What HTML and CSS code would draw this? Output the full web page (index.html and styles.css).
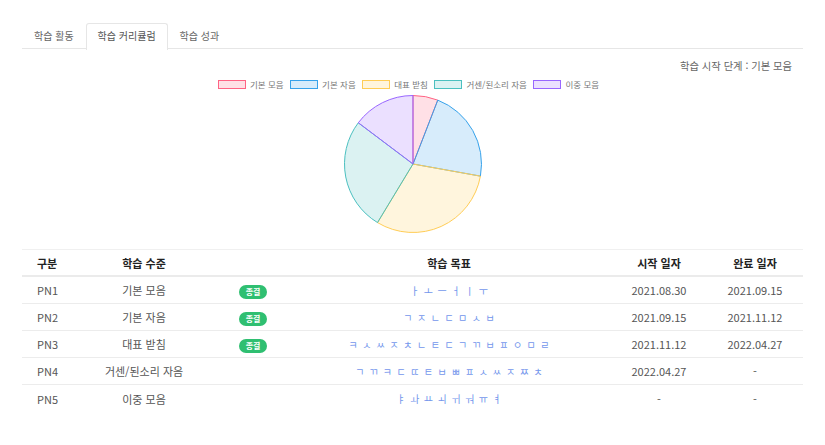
FILE: index.html
```html
<!DOCTYPE html>
<html lang="ko">
<head>
<meta charset="utf-8">
<link rel="stylesheet" href="styles.css">
</head>
<body>
<div class="page">
  <div class="tabs">
    <div class="tab">학습 활동</div>
    <div class="tab active">학습 커리큘럼</div>
    <div class="tab">학습 성과</div>
  </div>
  <div class="stage">학습 시작 단계 : 기본 모음</div>
  <div class="legend">
    <div class="lg"><span class="box pink"></span>기본 모음</div>
    <div class="lg"><span class="box blue"></span>기본 자음</div>
    <div class="lg"><span class="box yellow"></span>대표 받침</div>
    <div class="lg"><span class="box teal"></span>거센/된소리 자음</div>
    <div class="lg"><span class="box purple"></span>이중 모음</div>
  </div>
  <div class="chart">
    <svg class="pie" width="140" height="140" viewBox="0 0 140 140">
      <path d="M70 70 L70 1.5 A68.5 68.5 0 0 1 94.77 6.14 Z" fill="rgba(255,99,132,0.2)" stroke="rgb(255,99,132)" stroke-width="1"/>
      <path d="M70 70 L94.77 6.14 A68.5 68.5 0 0 1 137.42 82.13 Z" fill="rgba(54,162,235,0.2)" stroke="rgb(54,162,235)" stroke-width="1"/>
      <path d="M70 70 L137.42 82.13 A68.5 68.5 0 0 1 34.52 128.59 Z" fill="rgba(255,205,86,0.2)" stroke="rgb(255,205,86)" stroke-width="1"/>
      <path d="M70 70 L34.52 128.59 A68.5 68.5 0 0 1 15.29 28.78 Z" fill="rgba(75,192,192,0.2)" stroke="rgb(75,192,192)" stroke-width="1"/>
      <path d="M70 70 L15.29 28.78 A68.5 68.5 0 0 1 70 1.5 Z" fill="rgba(153,102,255,0.2)" stroke="rgb(153,102,255)" stroke-width="1"/>
    </svg>
  </div>
  <div class="table">
    <div class="row head">
      <div class="c1">구분</div>
      <div class="c2">학습 수준</div>
      <div class="c3"></div>
      <div class="c4">학습 목표</div>
      <div class="c5">시작 일자</div>
      <div class="c6">완료 일자</div>
    </div>
    <div class="row">
      <div class="c1">PN1</div>
      <div class="c2">기본 모음</div>
      <div class="c3"><span class="badge">종결</span></div>
      <div class="c4 jamo"><span>ㅏ</span><span>ㅗ</span><span>ㅡ</span><span>ㅓ</span><span>ㅣ</span><span>ㅜ</span></div>
      <div class="c5">2021.08.30</div>
      <div class="c6">2021.09.15</div>
    </div>
    <div class="row">
      <div class="c1">PN2</div>
      <div class="c2">기본 자음</div>
      <div class="c3"><span class="badge">종결</span></div>
      <div class="c4 jamo"><span>ㄱ</span><span>ㅈ</span><span>ㄴ</span><span>ㄷ</span><span>ㅁ</span><span>ㅅ</span><span>ㅂ</span></div>
      <div class="c5">2021.09.15</div>
      <div class="c6">2021.11.12</div>
    </div>
    <div class="row">
      <div class="c1">PN3</div>
      <div class="c2">대표 받침</div>
      <div class="c3"><span class="badge">종결</span></div>
      <div class="c4 jamo"><span>ㅋ</span><span>ㅅ</span><span>ㅆ</span><span>ㅈ</span><span>ㅊ</span><span>ㄴ</span><span>ㅌ</span><span>ㄷ</span><span>ㄱ</span><span>ㄲ</span><span>ㅂ</span><span>ㅍ</span><span>ㅇ</span><span>ㅁ</span><span>ㄹ</span></div>
      <div class="c5">2021.11.12</div>
      <div class="c6">2022.04.27</div>
    </div>
    <div class="row">
      <div class="c1">PN4</div>
      <div class="c2">거센/된소리 자음</div>
      <div class="c3"></div>
      <div class="c4 jamo"><span>ㄱ</span><span>ㄲ</span><span>ㅋ</span><span>ㄷ</span><span>ㄸ</span><span>ㅌ</span><span>ㅂ</span><span>ㅃ</span><span>ㅍ</span><span>ㅅ</span><span>ㅆ</span><span>ㅈ</span><span>ㅉ</span><span>ㅊ</span></div>
      <div class="c5">2022.04.27</div>
      <div class="c6">-</div>
    </div>
    <div class="row last">
      <div class="c1">PN5</div>
      <div class="c2">이중 모음</div>
      <div class="c3"></div>
      <div class="c4 jamo"><span>ㅑ</span><span>ㅘ</span><span>ㅛ</span><span>ㅚ</span><span>ㅟ</span><span>ㅝ</span><span>ㅠ</span><span>ㅕ</span></div>
      <div class="c5">-</div>
      <div class="c6">-</div>
    </div>
  </div>
</div>
</body>
</html>
```
FILE: styles.css
```css
* { box-sizing: border-box; }
html, body { margin: 0; padding: 0; background: #fff; }
body {
  font-family: "Noto Sans CJK KR", "Noto Sans", sans-serif;
  font-size: 11px;
  color: #555;
}
.page { padding: 23px 22px 0 22px; width: 825px; }
.tabs {
  display: flex;
  border-bottom: 1px solid #e6e6e6;
  height: 26px;
}
.tab {
  height: 26px;
  line-height: 24px;
  padding: 0 11px 0 11px;
  font-size: 10px;
  color: #666;
  border: 1px solid transparent;
  border-bottom: none;
  border-radius: 3px 3px 0 0;
  margin-bottom: -1px;
}
.tab.active {
  background: #fff;
  border-color: #e6e6e6;
  height: 27px;
  color: #555;
}
.stage {
  margin-top: 9px;
  text-align: right;
  padding-right: 11px;
  line-height: 16px;
  font-size: 10.3px;
  color: #666;
}
.legend {
  margin-top: 2px;
  display: flex;
  justify-content: center;
  gap: 6.5px;
  height: 16px;
  align-items: center;
  font-size: 8.5px;
  color: #777;
  padding-right: 8px;
}
.lg { display: flex; align-items: center; }
.box {
  display: inline-block;
  width: 28px;
  height: 9px;
  border: 1px solid;
  margin-right: 4px;
}
.pink { background: rgba(255,99,132,0.2); border-color: rgb(255,99,132); }
.blue { background: rgba(54,162,235,0.2); border-color: rgb(54,162,235); }
.yellow { background: rgba(255,205,86,0.2); border-color: rgb(255,205,86); }
.teal { background: rgba(75,192,192,0.2); border-color: rgb(75,192,192); }
.purple { background: rgba(153,102,255,0.2); border-color: rgb(153,102,255); }
.chart {
  display: flex;
  justify-content: center;
  margin-top: 2px;
  height: 140px;
}
.pie { display: block; }
.table {
  margin-top: 15px;
  border-top: 1px solid #f0f0f0;
}
.row {
  display: grid;
  grid-template-columns: 60px 124px 94px 298px 122px 70px;
  padding-right: 13px;
  height: 27px;
  align-items: center;
  border-bottom: 1px solid #ececec;
}
.row.last { border-bottom: none; }
.row.head {
  height: 27px;
  border-bottom: 2px solid #ebebeb;
  font-weight: bold;
  color: #222;
}
.c1 { padding-left: 15px; }
.c2, .c3, .c4, .c5, .c6 { text-align: center; }
.badge {
  display: inline-block;
  background: #2fbf71;
  color: #fff;
  font-size: 8px;
  font-weight: bold;
  line-height: 14px;
  height: 14px;
  padding: 0 7px;
  border-radius: 7px;
}
.jamo {
  display: flex;
  justify-content: center;
  gap: 4.5px;
  font-size: 10px;
  color: #7396ec;
}
```
